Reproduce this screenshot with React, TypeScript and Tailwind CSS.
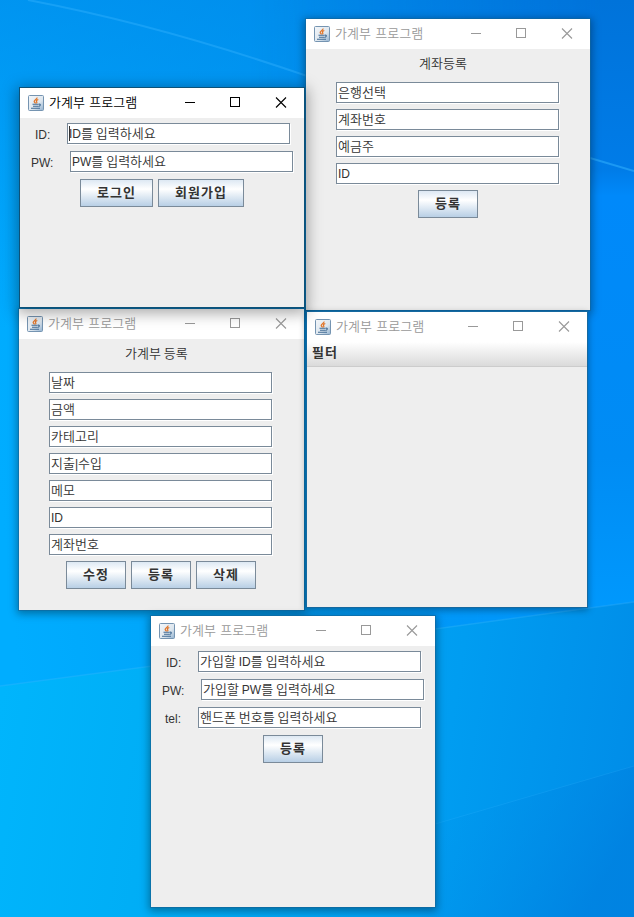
import React from "react";

function JavaIcon() {
  return (
    <svg width="16" height="16" viewBox="0 0 16 16" className="shrink-0">
      <defs>
        <linearGradient id="javaBg" x1="0" y1="0" x2="1" y2="1">
          <stop offset="0" stopColor="#f4f7fa" />
          <stop offset="0.6" stopColor="#dde6ee" />
          <stop offset="1" stopColor="#8fb0cf" />
        </linearGradient>
      </defs>
      <rect x="0.5" y="0.5" width="15" height="15" rx="1" fill="url(#javaBg)" stroke="#7594b1" />
      <path d="M9 2.500c.6 1.500-3 2.300-2.800 4 .1.800 1.300 1.200 1.200 2M10.300 4.500c-1.800.6-2.400 1.300-1.600 2.300.4.600.1 1.100-.5 1.500" fill="none" stroke="#e2762a" strokeWidth="1.300" />
      <path d="M4.500 9.300h6M5 11.200h5.200M3 13.200h9M10.700 9.200c2.300-.4 2.100 1.700-.2 2.300" fill="none" stroke="#416b94" strokeWidth="1.100" />
    </svg>
  );
}

function TitleBar({ active = false }: { active?: boolean }) {
  const tone = active ? "text-black" : "text-[#999999]";
  return (
    <div className={`flex h-[30px] shrink-0 items-center bg-white pl-2 ${tone}`}>
      <JavaIcon />
      <span className="ml-[5px] flex-1 pb-0.5 font-['Noto_Sans_CJK_KR',sans-serif] text-[13px] leading-[18px] font-[350] whitespace-nowrap [word-spacing:1.5px]">
        가계부 프로그램
      </span>
      <svg width="138" height="30" viewBox="0 0 138 30" fill="none" stroke="currentColor" className="shrink-0">
        <path d="M19 14.500h10" />
        <rect x="64.500" y="9.500" width="9" height="9" />
        <path d="M110 9.500l10 10M120 9.500l-10 10" strokeWidth="1.100" />
      </svg>
    </div>
  );
}

function Mixed({ text }: { text: string }) {
  return (
    <>
      {text.split(/([A-Za-z:|]+)/).map((part, i) =>
        /^[A-Za-z:|]+$/.test(part) ? (
          <span key={i} className="font-['Liberation_Sans',sans-serif] text-[12px]">{part}</span>
        ) : (
          <span key={i}>{part}</span>
        ),
      )}
    </>
  );
}

const hangul = "font-['Noto_Sans_CJK_KR',sans-serif] text-[13px] font-[350] text-[#333333] whitespace-pre";

function Field({ text, caret = false }: { text: string; caret?: boolean }) {
  return (
    <div className={`${hangul} relative flex h-[21px] w-[223px] shrink-0 items-center border border-[#7a8a99] bg-white pl-px leading-[18px] shadow-[1px_1px_0_#ffffff]`}>
      {caret && <span className="absolute top-0.5 left-px h-[15px] w-px bg-[#333333]" />}
      <span className="pb-px"><Mixed text={text} /></span>
    </div>
  );
}

function Button({ text, wide = "w-[60px]" }: { text: string; wide?: string }) {
  return (
    <div className={`${wide} flex h-7 shrink-0 items-center border border-[#7a8a99] bg-linear-to-b from-[#dde8f3] via-white via-35% to-[#b8cfe5] pb-0.5 pl-4 font-['Noto_Sans_CJK_KR',sans-serif] text-[13px] leading-[18px] font-bold tracking-[1px] whitespace-nowrap text-[#333333]`}>
      {text}
    </div>
  );
}

function LabeledRow({ label, text, pad, gap, caret }: { label: string; text: string; pad: string; gap: string; caret?: boolean }) {
  return (
    <div className={`flex h-[21px] items-center ${pad}`}>
      <span className={`${gap} shrink-0 pt-0.5 font-['Liberation_Sans',sans-serif] text-[12px] leading-[16px] text-[#333333]`}>{label}</span>
      <Field text={text} caret={caret} />
    </div>
  );
}

function Frame({ place, children, active }: { place: string; children: React.ReactNode; active?: boolean }) {
  return (
    <section className={`absolute flex flex-col bg-[#eeeeee] ${place}`}>
      <TitleBar active={active} />
      {children}
    </section>
  );
}

function Wallpaper() {
  return (
    <svg width="634" height="917" viewBox="0 0 634 917" className="absolute inset-0">
      <defs>
        <linearGradient id="sky" x1="0" y1="0.550" x2="1" y2="0.400">
          <stop offset="0" stopColor="#00adff" />
          <stop offset="0.550" stopColor="#009cf4" />
          <stop offset="1" stopColor="#0086ee" />
        </linearGradient>
        <linearGradient id="top" x1="0" y1="0" x2="0" y2="1">
          <stop offset="0" stopColor="#0086e8" stopOpacity="0.600" />
          <stop offset="1" stopColor="#0088ee" stopOpacity="0" />
        </linearGradient>
        <linearGradient id="low" gradientUnits="userSpaceOnUse" x1="0" y1="700" x2="634" y2="800">
          <stop offset="0" stopColor="#00b5fc" />
          <stop offset="0.250" stopColor="#00aef6" />
          <stop offset="0.700" stopColor="#009df1" />
          <stop offset="1" stopColor="#008de8" />
        </linearGradient>
        <linearGradient id="corner" x1="0" y1="0" x2="1" y2="0.400">
          <stop offset="0" stopColor="#0096ec" stopOpacity="0" />
          <stop offset="1" stopColor="#007fdf" stopOpacity="0.700" />
        </linearGradient>
        <linearGradient id="right" x1="0" y1="0" x2="0" y2="1">
          <stop offset="0" stopColor="#0073da" />
          <stop offset="0.260" stopColor="#007ce8" />
          <stop offset="0.300" stopColor="#0089fa" />
          <stop offset="0.700" stopColor="#008cf4" />
          <stop offset="1" stopColor="#009cff" />
        </linearGradient>
        <linearGradient id="fade" gradientUnits="userSpaceOnUse" x1="250" y1="0" x2="600" y2="0">
          <stop offset="0" stopColor="#000000" />
          <stop offset="1" stopColor="#ffffff" />
        </linearGradient>
        <mask id="fadeIn" maskUnits="userSpaceOnUse" x="0" y="0" width="634" height="917">
          <rect width="634" height="917" fill="url(#fade)" />
        </mask>
      </defs>
      <rect width="634" height="917" fill="url(#sky)" />
      <rect width="634" height="330" fill="url(#top)" />
      <path d="M250 0H634V602L250 653Z" fill="url(#right)" mask="url(#fadeIn)" />
      <path d="M0 686L634 602V917H0Z" fill="url(#low)" />
      <path d="M420 829L634 766V917H420Z" fill="url(#corner)" />
      <g fill="none" stroke="#36b5ff">
        <path d="M28 0Q160 25 310 77" strokeWidth="2" opacity="0.400" />
        <path d="M590 158L634 171" strokeWidth="2" opacity="0.500" />
        <path d="M0 686L160 665M435 629L634 602" strokeWidth="1.500" opacity="0.350" />
        <path d="M435 824L634 766" opacity="0.200" />
      </g>
    </svg>
  );
}

export default function App() {
  return (
    <main className="relative h-[917px] w-[634px] overflow-hidden bg-[#009cf4]">
      <Wallpaper />

      <Frame place="left-[306px] top-[19px] h-[291px] w-[284px] shadow-[0_0_0_1px_#13679c99,0_2px_8px_2px_#00000059]">
        <div className="flex flex-col items-start pl-[30px]">
          <div className={`${hangul} mt-[5px] mb-2.5 pl-[83px] leading-[18px]`}>계좌등록</div>
          <div className="flex flex-col gap-1.5">
            <Field text="은행선택" />
            <Field text="계좌번호" />
            <Field text="예금주" />
            <Field text="ID" />
          </div>
          <div className="mt-1.5 pl-[82px]"><Button text="등록" /></div>
        </div>
      </Frame>

      <Frame place="left-[19px] top-[309px] h-[301px] w-[285px] shadow-[0_0_0_1px_#13679c99,0_2px_8px_2px_#00000059]">
        <div className="flex flex-col items-start pl-[30px]">
          <div className={`${hangul} mt-[5px] mb-2.5 pl-[76px] leading-[18px]`}>가계부 등록</div>
          <div className="flex flex-col gap-1.5">
            <Field text="날짜" />
            <Field text="금액" />
            <Field text="카테고리" />
            <Field text="지출|수입" />
            <Field text="메모" />
            <Field text="ID" />
            <Field text="계좌번호" />
          </div>
          <div className="mt-1.5 flex gap-[5px] pl-[17px]">
            <Button text="수정" />
            <Button text="등록" />
            <Button text="삭제" />
          </div>
        </div>
      </Frame>

      <Frame place="left-[307px] top-[312px] h-[295px] w-[280px] shadow-[0_0_0_1px_#1569a0,0_2px_7px_1px_#00000059]">
        <div className="flex h-[25px] items-center border-b border-[#cccccc] bg-linear-to-b from-white to-[#dadada] pb-1 pl-[5px] font-['Noto_Sans_CJK_KR',sans-serif] text-[13px] leading-[18px] font-bold tracking-[1px] text-[#333333]">
          필터
        </div>
      </Frame>

      <Frame place="left-[151px] top-[616px] h-[291px] w-[284px] shadow-[0_0_0_1px_#13679c99,0_2px_8px_2px_#00000059]">
        <div className="flex flex-col gap-[7px] pt-[5px]">
          <LabeledRow label="ID:" text="가입할 ID를 입력하세요" pad="pl-[15px]" gap="w-8" />
          <LabeledRow label="PW:" text="가입할 PW를 입력하세요" pad="pl-[11px]" gap="w-[39px]" />
          <LabeledRow label="tel:" text="핸드폰 번호를 입력하세요" pad="pl-[14px]" gap="w-[33px]" />
          <div className="pl-[112px]"><Button text="등록" /></div>
        </div>
      </Frame>

      <Frame active place="left-[20px] top-[88px] h-[219px] w-[284px] shadow-[0_0_0_1px_#0d5278,0_3px_14px_3px_#00000059]">
        <div className="flex flex-col gap-[7px] pt-[5px]">
          <LabeledRow label="ID:" text="ID를 입력하세요" pad="pl-[15px]" gap="w-8" caret />
          <LabeledRow label="PW:" text="PW를 입력하세요" pad="pl-[11px]" gap="w-[39px]" />
          <div className="flex gap-[5px] pl-[60px]">
            <Button text="로그인" wide="w-[73px]" />
            <Button text="회원가입" wide="w-[86px]" />
          </div>
        </div>
      </Frame>
    </main>
  );
}
